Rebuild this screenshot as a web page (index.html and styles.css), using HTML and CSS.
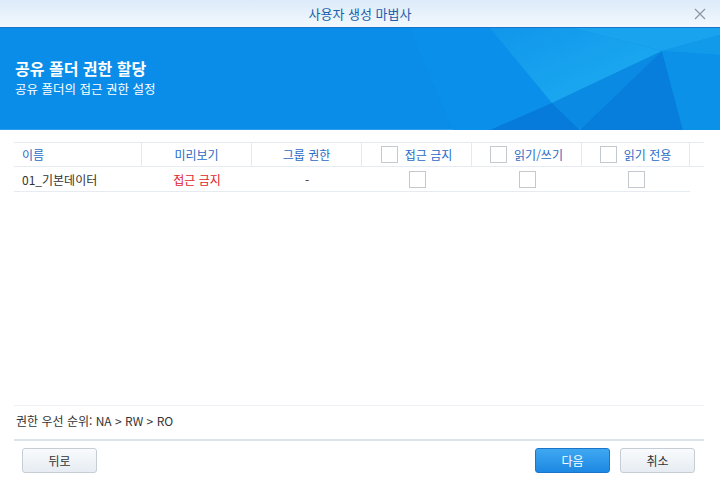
FILE: index.html
```html
<!DOCTYPE html>
<html lang="ko">
<head>
    <meta charset="UTF-8">
    <title>사용자 생성 마법사</title>
    <link rel="stylesheet" href="styles.css">
</head>
<body>
    <div class="window">
        <div class="titlebar">
            <span class="titlebar-text">사용자 생성 마법사</span>
            <svg class="close-icon" width="12" height="12" viewBox="0 0 12 12">
                <path d="M1 1 L11 11 M11 1 L1 11" stroke="#8a96a3" stroke-width="1.2" fill="none"/>
            </svg>
        </div>

        <div class="banner">
            <svg class="banner-art" width="720" height="102" viewBox="0 0 720 102" preserveAspectRatio="none">
                <defs>
                    <linearGradient id="glow" x1="0" y1="0" x2="1" y2="1">
                        <stop offset="0" stop-color="#1196eb"/>
                        <stop offset="1" stop-color="#1eaef1"/>
                    </linearGradient>
                </defs>
                <polygon points="410,0 490,0 552,75 490,102 453,102" fill="#0a90ea"/>
                <polygon points="490,0 573,0 662,23 552,75" fill="url(#glow)"/>
                <polygon points="573,0 720,0 720,7 662,23" fill="#19a2ed"/>
                <polygon points="490,102 552,75 580,102" fill="#067bdb"/>
                <polygon points="552,75 662,23 580,102" fill="#0a8ae3"/>
                <polygon points="662,23 683,102 580,102" fill="#077edc"/>
                <polygon points="662,23 720,7 720,27" fill="#129aea"/>
                <polygon points="662,23 720,27 720,102 683,102" fill="#0b92e8"/>
            </svg>
            <div class="banner-text">
                <div class="banner-title">공유 폴더 권한 할당</div>
                <div class="banner-sub">공유 폴더의 접근 권한 설정</div>
            </div>
        </div>

        <div class="content">
            <div class="grid">
                <div class="row head">
                    <div class="cell name">이름</div>
                    <div class="cell">미리보기</div>
                    <div class="cell">그룹 권한</div>
                    <div class="cell"><span class="box"></span>접근 금지</div>
                    <div class="cell"><span class="box"></span>읽기/쓰기</div>
                    <div class="cell"><span class="box"></span>읽기 전용</div>
                    <div class="cell pad"></div>
                </div>
                <div class="row data">
                    <div class="cell name">01_기본데이터</div>
                    <div class="cell denied">접근 금지</div>
                    <div class="cell">-</div>
                    <div class="cell"><span class="box"></span></div>
                    <div class="cell"><span class="box"></span></div>
                    <div class="cell"><span class="box"></span></div>
                </div>
            </div>

            <div class="priority">권한 우선 순위: NA &gt; RW &gt; RO</div>
        </div>

        <div class="footer">
            <button class="btn">뒤로</button>
            <div class="footer-right">
                <button class="btn primary">다음</button>
                <button class="btn">취소</button>
            </div>
        </div>
    </div>
</body>
</html>
```

FILE: styles.css
```css
body {
    margin: 0;
    padding: 0;
    font-family: "Noto Sans CJK KR", "Liberation Sans", sans-serif;
    font-size: 12px;
    color: #333;
    background: #fff;
}
.window {
    width: 720px;
    height: 479px;
    display: flex;
    flex-direction: column;
    overflow: hidden;
}
.titlebar {
    height: 28px;
    flex-shrink: 0;
    display: flex;
    align-items: center;
    justify-content: center;
    position: relative;
    background: linear-gradient(#dcebf9, #f3f8fd);
    border-bottom: 1px solid #1c74c9;
    box-sizing: border-box;
}
.titlebar-text {
    color: #1c5fae;
    font-size: 13px;
}
.close-icon {
    position: absolute;
    right: 14px;
    top: 8px;
}

.banner {
    height: 102px;
    flex-shrink: 0;
    background: #0a8de9;
    position: relative;
    box-sizing: border-box;
    border-bottom: 1px solid #2e9eef;
}
.banner-art {
    position: absolute;
    left: 0;
    top: 0;
}
.banner-text {
    position: relative;
    padding: 30px 0 0 15px;
    color: #fff;
}
.banner-title {
    font-size: 16px;
    font-weight: bold;
    line-height: 21px;
}
.banner-sub {
    font-size: 12.5px;
    line-height: 18px;
    margin-top: 1px;
}

.content {
    flex: 1;
    display: flex;
    flex-direction: column;
    justify-content: space-between;
    padding: 12px 16px 0 14px;
}
.grid {
    display: flex;
    flex-direction: column;
}
.row {
    display: grid;
    grid-template-columns: 128px 110px 110px 110px 110px 108px 13px;
    border-bottom: 1px solid #e6ebf1;
    box-sizing: border-box;
}
.row.head {
    height: 25px;
    border-top: 1px solid #e6ebf1;
    color: #2a6bc5;
}
.row.data {
    height: 25px;
    width: 676px;
}
.cell {
    display: flex;
    align-items: center;
    justify-content: center;
    gap: 7px;
}
.head .cell {
    border-right: 1px solid #e3e9f0;
}
.head .cell.pad {
    border-right: none;
}
.cell.name {
    justify-content: flex-start;
    padding-left: 8px;
}
.denied {
    color: #e0252c;
}
.box {
    display: inline-block;
    width: 15px;
    height: 15px;
    border: 1px solid #c3c9cf;
    background: #fff;
}

.priority {
    border-top: 1px solid #eef2f6;
    border-bottom: 2px solid #dde2e7;
    height: 33px;
    line-height: 30px;
    padding-left: 2px;
    color: #333;
}

.footer {
    height: 38px;
    flex-shrink: 0;
    display: flex;
    justify-content: space-between;
    align-items: flex-start;
    padding: 7px 25px 0 22px;
    box-sizing: border-box;
}
.footer-right {
    display: flex;
    gap: 10px;
}
.btn {
    width: 75px;
    height: 25px;
    border: 1px solid #c6cdd5;
    border-radius: 3px;
    background: linear-gradient(#f9fbfd, #e6ecf2);
    font-family: "Noto Sans CJK KR", "Liberation Sans", sans-serif;
    font-size: 12px;
    color: #333;
    padding: 0;
}
.btn.primary {
    border-color: #1b76c9;
    background: linear-gradient(#40a8f2, #1d88e2);
    color: #fff;
}
```
